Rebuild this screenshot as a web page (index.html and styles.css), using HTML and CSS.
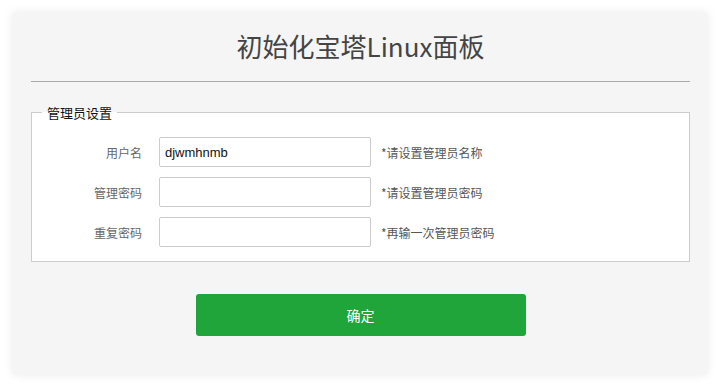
FILE: index.html
```html
<!DOCTYPE html>
<html lang="zh-CN">
<head>
    <meta charset="UTF-8">
    <title>初始化宝塔Linux面板</title>
    <link rel="stylesheet" href="styles.css">
</head>
<body>

<div class="setup-box">
    <h1 class="setup-title">初始化宝塔Linux面板</h1>

    <form class="setup-form" onsubmit="return false">
        <fieldset class="admin-set">
            <legend>管理员设置</legend>

            <div class="line">
                <span class="tname">用户名</span>
                <input type="text" class="bt-input" value="djwmhnmb">
                <span class="tips">*请设置管理员名称</span>
            </div>
            <div class="line">
                <span class="tname">管理密码</span>
                <input type="password" class="bt-input">
                <span class="tips">*请设置管理员密码</span>
            </div>
            <div class="line">
                <span class="tname">重复密码</span>
                <input type="password" class="bt-input">
                <span class="tips">*再输一次管理员密码</span>
            </div>
        </fieldset>

        <div class="btn-row">
            <button type="submit" class="btn-success">确定</button>
        </div>
    </form>
</div>

</body>
</html>
```

FILE: styles.css
```css
* {
    box-sizing: border-box;
}

body {
    margin: 0;
    padding: 12px;
    background-color: #fff;
    font-family: "Noto Sans CJK SC", "Liberation Sans", sans-serif;
}

.setup-box {
    width: 696px;
    height: 363px;
    padding: 0 18px 0 19px;
    background-color: #f5f5f5;
    border-radius: 4px;
    box-shadow: 0 0 10px rgba(0, 0, 0, 0.08);
}

.setup-title {
    margin: 0;
    height: 70px;
    line-height: 68px;
    text-align: center;
    font-size: 26px;
    font-weight: normal;
    color: #444;
    border-bottom: 1px solid #aaa;
}

.admin-set {
    margin: 21px 0 0;
    padding: 15px 0 14px;
    border: 1px solid #ccc;
    background-color: #fff;
}

.admin-set legend {
    margin-left: 10px;
    padding: 0 5px;
    font-size: 13px;
    color: #111;
}

.line {
    display: flex;
    align-items: center;
    height: 30px;
    margin-bottom: 10px;
}

.line:last-child {
    margin-bottom: 0;
}

.tname {
    width: 110px;
    text-align: right;
    font-size: 12px;
    color: #666;
}

.bt-input {
    width: 212px;
    height: 30px;
    margin-left: 17px;
    padding: 0 5px;
    border: 1px solid #ccc;
    border-radius: 2px;
    font-family: "Liberation Sans", sans-serif;
    font-size: 13px;
    color: #111;
    background-color: #fff;
}

.tips {
    margin-left: 10px;
    font-size: 12px;
    color: #555;
}

.btn-row {
    display: flex;
    justify-content: center;
    margin-top: 32px;
}

.btn-success {
    width: 330px;
    height: 42px;
    border: none;
    border-radius: 3px;
    background-color: #20a53a;
    color: #fff;
    font-family: "Noto Sans CJK SC", sans-serif;
    font-size: 14px;
    cursor: pointer;
}
```
